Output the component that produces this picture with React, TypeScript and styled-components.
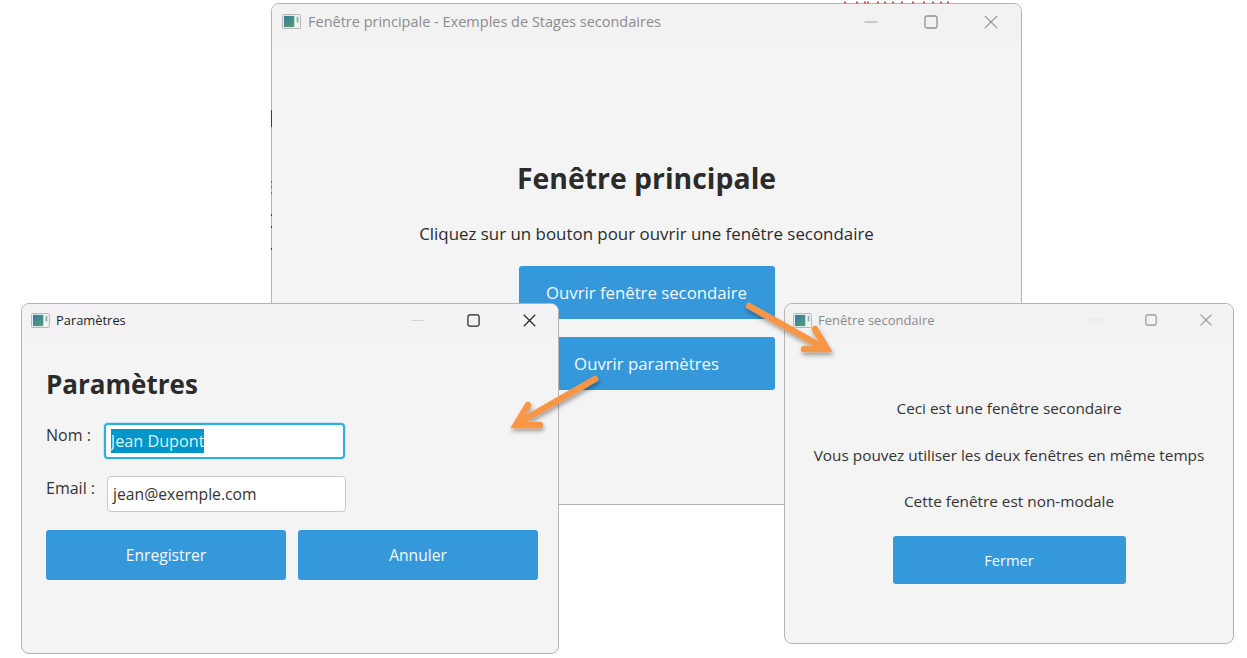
import React from "react";
import styled, { createGlobalStyle } from "styled-components";

const Global = createGlobalStyle`
  html, body { margin: 0; padding: 0; background: #fff; }
  body { font-family: "Open Sans", "Noto Sans", "Liberation Sans", sans-serif; color: #2b2b2b; }
`;

const Canvas = styled.div`
  position: relative;
  width: 1247px;
  height: 658px;
  overflow: hidden;
  background: #fff;
`;

const Window = styled.section<{ $x: number; $y: number; $w: number; $h: number }>`
  position: absolute;
  left: ${(p) => p.$x}px;
  top: ${(p) => p.$y}px;
  width: ${(p) => p.$w}px;
  height: ${(p) => p.$h}px;
  box-sizing: border-box;
  display: flex;
  flex-direction: column;
  background: #f4f4f4;
  border: 1px solid #b4b4b4;
  border-radius: 8px;
  overflow: hidden;
`;

const TitleBar = styled.header<{ $active?: boolean; $h: number; $pad: number; $gap: number }>`
  flex: none;
  box-sizing: border-box;
  height: ${(p) => p.$h}px;
  padding-left: ${(p) => p.$pad}px;
  padding-bottom: 2px;
  display: flex;
  align-items: center;
  gap: ${(p) => p.$gap}px;
  background: ${(p) => (p.$active ? "#f5f2f6" : "#f2f2f2")};
  color: ${(p) => (p.$active ? "#222" : "#8c8c8c")};
`;

const TitleText = styled.span<{ $size: number }>`
  font-size: ${(p) => p.$size}px;
  white-space: nowrap;
`;

const Controls = styled.div<{ $gap: number; $right: number }>`
  margin-left: auto;
  margin-right: ${(p) => p.$right}px;
  display: flex;
  align-items: center;
  gap: ${(p) => p.$gap}px;
`;

const Body = styled.div`
  flex: 1;
  display: flex;
  flex-direction: column;
  align-items: center;
`;

const MainBody = styled(Body)`
  padding-top: 117px;
`;

const MainHeading = styled.h1`
  margin: 0;
  font-size: 28.4px;
  line-height: 40px;
  font-weight: 700;
  color: #2b2b2b;
`;

const Lead = styled.p`
  margin: 24px 0 20px;
  font-size: 16.9px;
  line-height: 24px;
  color: #2b2b2b;
`;

const Button = styled.button<{ $w: number; $h: number; $size: number }>`
  width: ${(p) => p.$w}px;
  height: ${(p) => p.$h}px;
  flex: none;
  padding: 0;
  border: 0;
  border-radius: 3px;
  background: #3498db;
  color: #f4fafe;
  font-family: inherit;
  font-size: ${(p) => p.$size}px;
`;

const MainButtons = styled.div`
  display: flex;
  flex-direction: column;
  gap: 18px;
`;

const SettingsBody = styled.div`
  flex: 1;
  padding: 27px 20px 0 24px;
  display: flex;
  flex-direction: column;
`;

const SettingsHeading = styled.h2`
  margin: 0 0 20px;
  font-size: 26px;
  line-height: 38px;
  font-weight: 700;
  color: #2b2b2b;
`;

const FormRow = styled.div`
  display: flex;
  align-items: flex-start;
  height: 38px;
  margin-bottom: 15px;
  gap: 12px;
`;

const FieldLabel = styled.label`
  font-size: 16px;
  line-height: 24px;
  color: #333;
  white-space: nowrap;
`;

const Field = styled.div<{ $focused?: boolean }>`
  box-sizing: border-box;
  width: ${(p) => (p.$focused ? 241 : 239)}px;
  height: 36px;
  margin-left: ${(p) => (p.$focused ? 1 : 0)}px;
  padding: 0 5px;
  display: flex;
  align-items: center;
  background: #fff;
  border: ${(p) => (p.$focused ? "2px solid #2bb0e0" : "1px solid #c8c8c8")};
  border-radius: 4px;
  box-shadow: ${(p) => (p.$focused ? "0 0 0 1px rgba(43, 176, 224, 0.2)" : "none")};
  font-size: 15.7px;
  color: #333;
`;

const Selected = styled.span`
  background: #0096c9;
  color: #dff3fa;
  line-height: 24px;
  font-size: 16.2px;
`;

const ButtonRow = styled.div`
  display: flex;
  gap: 12px;
  margin-top: 1px;
`;

const SecondaryBody = styled(Body)`
  padding-top: 59px;
`;

const Line = styled.p`
  margin: 0 0 23px;
  font-size: 15.35px;
  line-height: 23.5px;
  color: #333;
  white-space: nowrap;
  &:last-of-type {
    margin-bottom: 22px;
  }
`;

const OverlayLayer = styled.svg`
  position: absolute;
  left: 0;
  top: 0;
  pointer-events: none;
`;

const AppIcon: React.FC<{ size: number }> = ({ size }) => (
  <svg width={size} height={Math.round(size * 0.8)} viewBox="0 0 20 16">
    <defs>
      <linearGradient id="ic" x1="0" y1="0" x2="1" y2="1">
        <stop offset="0" stopColor="#3a7a9c" />
        <stop offset="1" stopColor="#4fa078" />
      </linearGradient>
    </defs>
    <rect x="0.5" y="0.5" width="19" height="15" rx="1" fill="#f4f4f4" stroke="#b0b0b0" />
    <rect x="2" y="2" width="11" height="12" fill="url(#ic)" />
    <rect x="15.5" y="3" width="1.8" height="6" fill="#7ab0a8" />
  </svg>
);

const WinControls: React.FC<{ color: string; minColor: string; size?: number }> = ({
  color,
  minColor,
  size = 14,
}) => (
  <>
    <svg width={size} height={size} viewBox="0 0 14 14">
      <path d="M0.5 7H13.5" stroke={minColor} strokeWidth="1" fill="none" />
    </svg>
    <svg width={size} height={size} viewBox="0 0 14 14">
      <rect x="1" y="1" width="12" height="12" rx="2" stroke={color} strokeWidth="1.3" fill="none" />
    </svg>
    <svg width={size} height={size} viewBox="0 0 14 14">
      <path d="M0.8 0.8L13.2 13.2M13.2 0.8L0.8 13.2" stroke={color} strokeWidth="1.2" fill="none" />
    </svg>
  </>
);

// bits of whatever sat behind the main window, left in the capture
const Remnants: React.FC = () => (
  <OverlayLayer width="1247" height="658" viewBox="0 0 1247 658">
    <path
      d="M845 1.5V3.5M857 1.5V3.5M865 1.5V3.5M868 1.5V3.5M878 1.5V3.5M885 1.5V3.5M893 1.5V3.5M902 1.5V3.5M913 1.5V3.5M924 1.5V3.5M933 1.5V3.5M941 1.5V3.5M948 1.5V3.5"
      stroke="#d8524c"
      strokeWidth="2"
    />
    <path d="M271.5 110V127" stroke="#2c3f66" strokeWidth="1" />
    <path d="M271.5 181V183M271.5 186V188M271.5 192V194" stroke="#5d7a70" strokeWidth="1" />
    <path d="M271.5 214V216M271.5 226V228M271.5 248V250" stroke="#3a3a3a" strokeWidth="1" />
  </OverlayLayer>
);

const Arrows: React.FC = () => (
  <OverlayLayer width="1247" height="658" viewBox="0 0 1247 658">
    <defs>
      <filter id="sh" x="-20%" y="-20%" width="140%" height="140%">
        <feDropShadow dx="1" dy="3" stdDeviation="2" floodColor="#000" floodOpacity="0.35" />
      </filter>
    </defs>
    <g filter="url(#sh)" fill="none" stroke="#f79646" strokeWidth="6.5" strokeLinecap="round" strokeLinejoin="miter">
      <path d="M749 306L824 348" />
      <path d="M815 329L827 349L804 349" />
      <path d="M595 379L520 422" />
      <path d="M528 405L516 425L540 425" />
    </g>
  </OverlayLayer>
);

export default function App() {
  return (
    <Canvas>
      <Global />
      <Window $x={271} $y={3} $w={751} $h={502}>
        <TitleBar $h={37} $pad={10} $gap={7}>
          <AppIcon size={19} />
          <TitleText $size={14.5}>Fenêtre principale - Exemples de Stages secondaires</TitleText>
          <Controls $gap={46} $right={23}>
            <WinControls color="#909090" minColor="#a0a0a0" />
          </Controls>
        </TitleBar>
        <MainBody>
          <MainHeading>Fenêtre principale</MainHeading>
          <Lead>Cliquez sur un bouton pour ouvrir une fenêtre secondaire</Lead>
          <MainButtons>
            <Button $w={256} $h={53} $size={16.75}>Ouvrir fenêtre secondaire</Button>
            <Button $w={256} $h={53} $size={16.75}>Ouvrir paramètres</Button>
          </MainButtons>
        </MainBody>
      </Window>
      <Remnants />

      <Window $x={21} $y={303} $w={538} $h={351}>
        <TitleBar $active $h={34} $pad={9} $gap={6}>
          <AppIcon size={19} />
          <TitleText $size={12.9}>Paramètres</TitleText>
          <Controls $gap={43} $right={22}>
            <WinControls color="#222" minColor="#cfcfcf" size={13} />
          </Controls>
        </TitleBar>
        <SettingsBody>
          <SettingsHeading>Paramètres</SettingsHeading>
          <FormRow>
            <FieldLabel>Nom :</FieldLabel>
            <Field $focused>
              <Selected>Jean Dupont</Selected>
            </Field>
          </FormRow>
          <FormRow>
            <FieldLabel>Email :</FieldLabel>
            <Field>jean@exemple.com</Field>
          </FormRow>
          <ButtonRow>
            <Button $w={240} $h={50} $size={15.6}>Enregistrer</Button>
            <Button $w={240} $h={50} $size={15.6}>Annuler</Button>
          </ButtonRow>
        </SettingsBody>
      </Window>

      <Window $x={784} $y={303} $w={450} $h={341}>
        <TitleBar $h={34} $pad={8} $gap={6}>
          <AppIcon size={19} />
          <TitleText $size={13}>Fenêtre secondaire</TitleText>
          <Controls $gap={43} $right={21}>
            <WinControls color="#909090" minColor="#e0e0e0" size={12} />
          </Controls>
        </TitleBar>
        <SecondaryBody>
          <Line>Ceci est une fenêtre secondaire</Line>
          <Line>Vous pouvez utiliser les deux fenêtres en même temps</Line>
          <Line>Cette fenêtre est non-modale</Line>
          <Button $w={233} $h={48} $size={14.7}>Fermer</Button>
        </SecondaryBody>
      </Window>

      <Arrows />
    </Canvas>
  );
}
